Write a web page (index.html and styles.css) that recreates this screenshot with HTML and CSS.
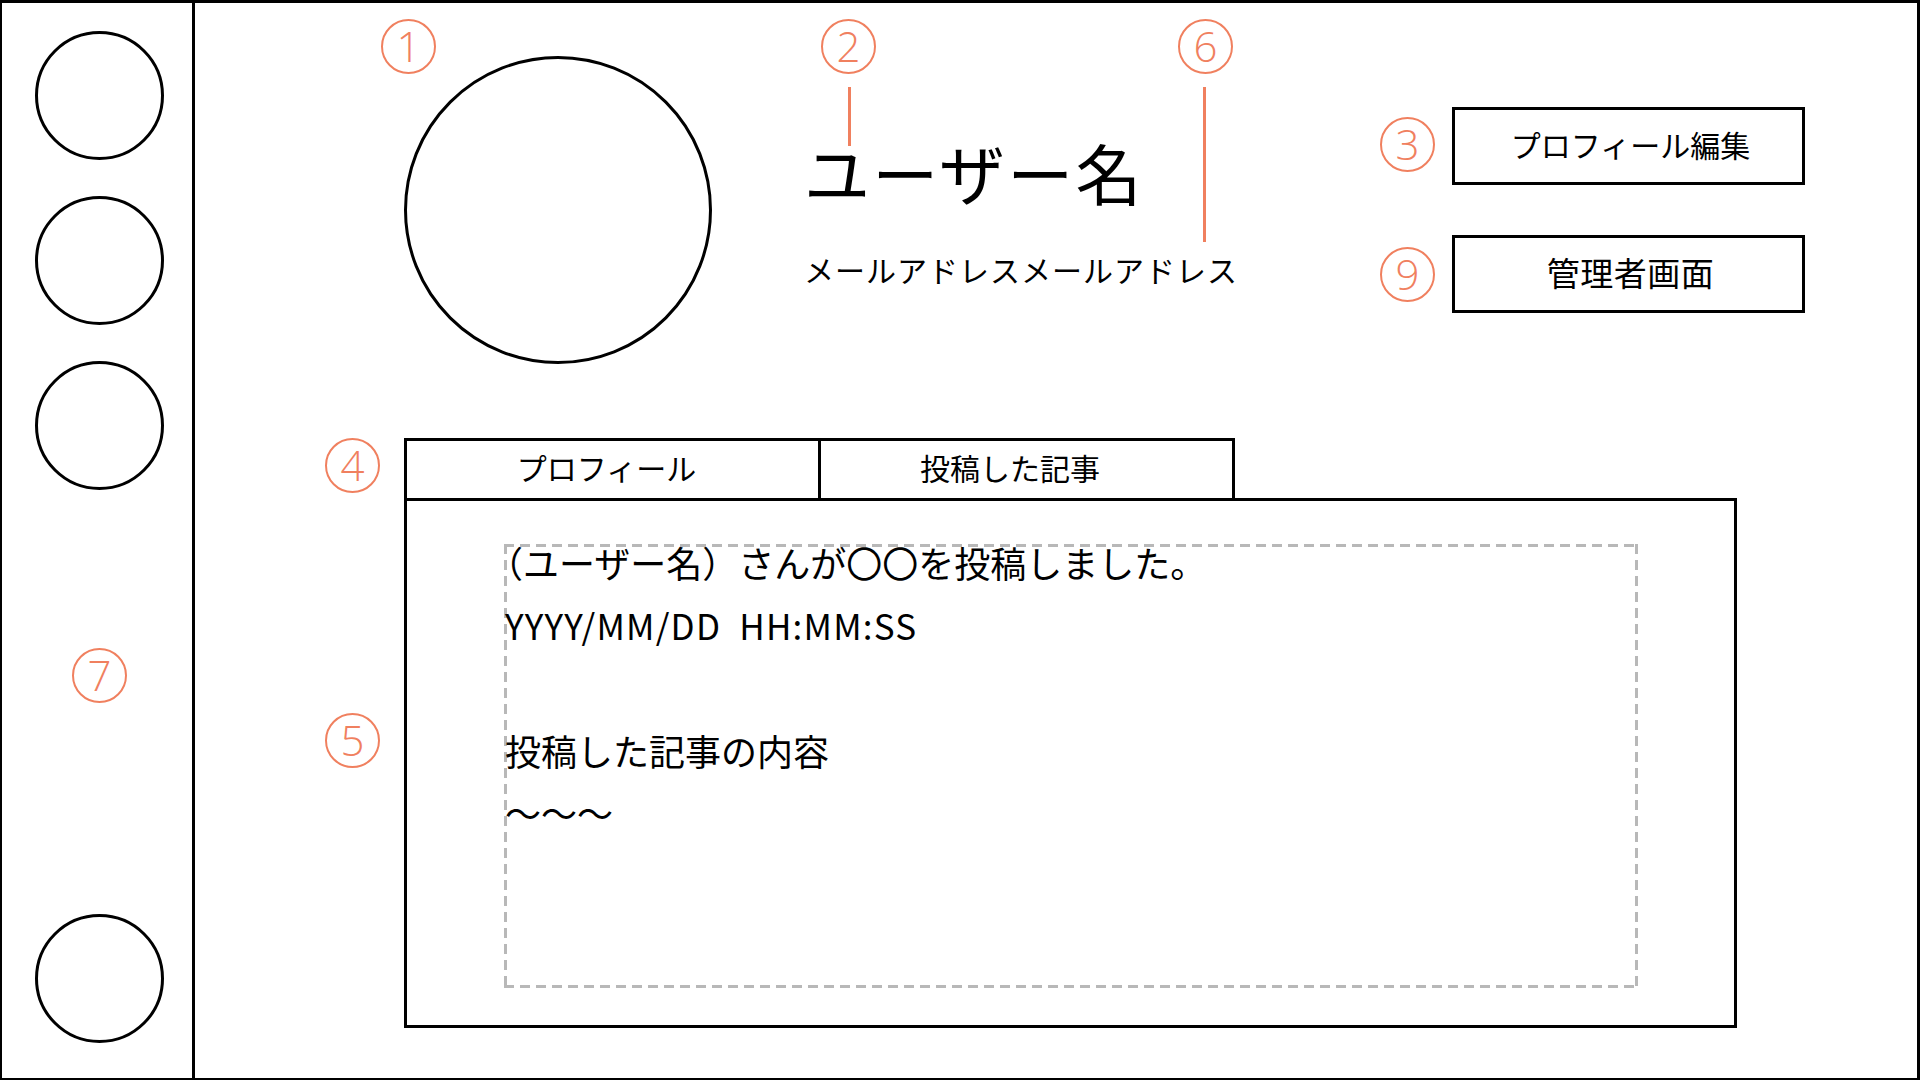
FILE: index.html
```html
<!DOCTYPE html>
<html lang="ja">
<head>
<meta charset="utf-8">
<title>マイページ ワイヤーフレーム</title>
<link rel="stylesheet" href="styles.css">
</head>
<body>
<div class="frame">
  <aside class="sidebar">
    <div class="side-icon"></div>
    <div class="side-icon"></div>
    <div class="side-icon"></div>
    <div class="side-spacer"></div>
    <div class="side-icon"></div>
  </aside>

  <main class="main">
    <section class="header">
      <div class="avatar"></div>
      <div class="info">
        <h1 class="username">ユーザー名</h1>
        <p class="email">メールアドレスメールアドレス</p>
      </div>
      <div class="actions">
        <button class="btn">プロフィール編集</button>
        <button class="btn btn-admin">管理者画面</button>
      </div>
    </section>

    <section class="content">
      <div class="tabs">
        <div class="tab tab-profile">プロフィール</div>
        <div class="tab tab-posts">投稿した記事</div>
      </div>
      <div class="panel">
        <div class="post">
          <div class="post-text">
            <p class="post-line paren">（ユーザー名）さんが〇〇を投稿しました。</p>
            <p class="post-line latin">YYYY/MM/DD&nbsp;&nbsp;HH:MM:SS</p>
            <p class="post-line">&nbsp;</p>
            <p class="post-line">投稿した記事の内容</p>
            <p class="post-line">〜〜〜</p>
          </div>
        </div>
      </div>
    </section>
  </main>

  <span class="note n1">1</span>
  <span class="note n2">2</span>
  <span class="note n6">6</span>
  <span class="note n3">3</span>
  <span class="note n9">9</span>
  <span class="note n4">4</span>
  <span class="note n5">5</span>
  <span class="note n7">7</span>
  <span class="leader l2"></span>
  <span class="leader l6"></span>
</div>
</body>
</html>
```

FILE: styles.css
```css
* { box-sizing: border-box; }

html, body {
  margin: 0;
  padding: 0;
  background: #fff;
}

body {
  font-family: "Noto Sans CJK JP", "Noto Sans", sans-serif;
  color: #000;
}

.frame {
  position: relative;
  width: 1920px;
  height: 1080px;
  border-top: 3px solid #000;
  border-left: 2px solid #000;
  border-right: 3px solid #000;
  border-bottom: 2px solid #000;
  display: flex;
  overflow: hidden;
}

/* ---------- sidebar ---------- */
.sidebar {
  width: 193px;
  flex: none;
  border-right: 3px solid #000;
  display: flex;
  flex-direction: column;
  align-items: center;
  padding: 28px 0 35px 4px;
}

.side-icon {
  width: 129px;
  height: 129px;
  border: 3px solid #000;
  border-radius: 50%;
  flex: none;
}

.side-icon + .side-icon { margin-top: 36px; }

.side-spacer { flex: 1; }

/* ---------- main ---------- */
.main {
  flex: 1;
  padding: 53px 0 0 209px;
  display: flex;
  flex-direction: column;
}

.header {
  display: flex;
  align-items: flex-start;
  height: 382px;
}

.avatar {
  width: 308px;
  height: 308px;
  border: 3px solid #000;
  border-radius: 50%;
  flex: none;
}

.info {
  margin-left: 92px;
  padding-top: 82px;
  width: 546px;
  flex: none;
}

.username {
  margin: 0;
  font-size: 66px;
  font-weight: 400;
  line-height: 66px;
  letter-spacing: 2.2px;
}

.email {
  margin: 50px 0 0;
  font-size: 30px;
  line-height: 30px;
  letter-spacing: 1px;
}

.actions {
  margin-left: 102px;
  display: flex;
  flex-direction: column;
  gap: 50px;
  padding-top: 51px;
}

.btn {
  width: 353px;
  height: 78px;
  border: 3px solid #000;
  background: #fff;
  font-family: "Noto Sans CJK JP", "Noto Sans", sans-serif;
  font-size: 30px;
  color: #000;
  padding: 0 0 5px 4px;
  cursor: pointer;
}

.btn-admin {
  font-size: 33px;
  letter-spacing: 0.5px;
}

/* ---------- tabs + panel ---------- */
.content {
  display: flex;
  flex-direction: column;
}

.tabs {
  display: flex;
  width: 831px;
  height: 60px;
  border: 3px solid #000;
  border-bottom: none;
}

.tab {
  display: flex;
  align-items: center;
  justify-content: center;
  font-size: 30px;
  padding-bottom: 5px;
}

.tab-profile {
  flex: none;
  width: 411px;
  padding-right: 12px;
}

.tab-posts {
  flex: 1;
  border-left: 3px solid #000;
  padding-right: 33px;
}

.panel {
  width: 1333px;
  height: 530px;
  border: 3px solid #000;
  padding: 43px 96px 37px 97px;
}

.post {
  display: flow-root;
  height: 100%;
  background:
    repeating-linear-gradient(90deg, #b8b8b8 0 10px, transparent 10px 16px) left top / 100% 3px no-repeat,
    repeating-linear-gradient(90deg, #b8b8b8 0 10px, transparent 10px 16px) left bottom / 100% 3px no-repeat,
    repeating-linear-gradient(180deg, #b8b8b8 0 10px, transparent 10px 16px) left top / 3px 100% no-repeat,
    repeating-linear-gradient(180deg, #b8b8b8 0 10px, transparent 10px 16px) right top / 3px 100% no-repeat;
}

.post-text {
  margin: -13px 0 0 1px;
}

.post-line {
  margin: 0;
  font-size: 36px;
  line-height: 62.5px;
  white-space: nowrap;
}

.paren { text-indent: -0.5em; }

.latin {
  font-size: 35px;
  letter-spacing: 1.2px;
}

/* ---------- annotation markers ---------- */
.note {
  position: absolute;
  width: 55px;
  height: 55px;
  border: 2px solid #f0805f;
  border-radius: 50%;
  color: #f0805f;
  font-family: "Open Sans", "Noto Sans", sans-serif;
  font-weight: 300;
  font-size: 42px;
  line-height: 49px;
  text-align: center;
}

.n1 { left: 379px; top: 16px; }
.n2 { left: 819px; top: 16px; }
.n6 { left: 1176px; top: 16px; }
.n3 { left: 1378px; top: 114px; }
.n9 { left: 1378px; top: 244px; }
.n4 { left: 323px; top: 435px; }
.n5 { left: 323px; top: 710px; }
.n7 { left: 70px; top: 645px; }

.leader {
  position: absolute;
  width: 3px;
  background: #f0805f;
}

.l2 { left: 846px; top: 84px; height: 59px; }
.l6 { left: 1201px; top: 84px; height: 155px; }
```
